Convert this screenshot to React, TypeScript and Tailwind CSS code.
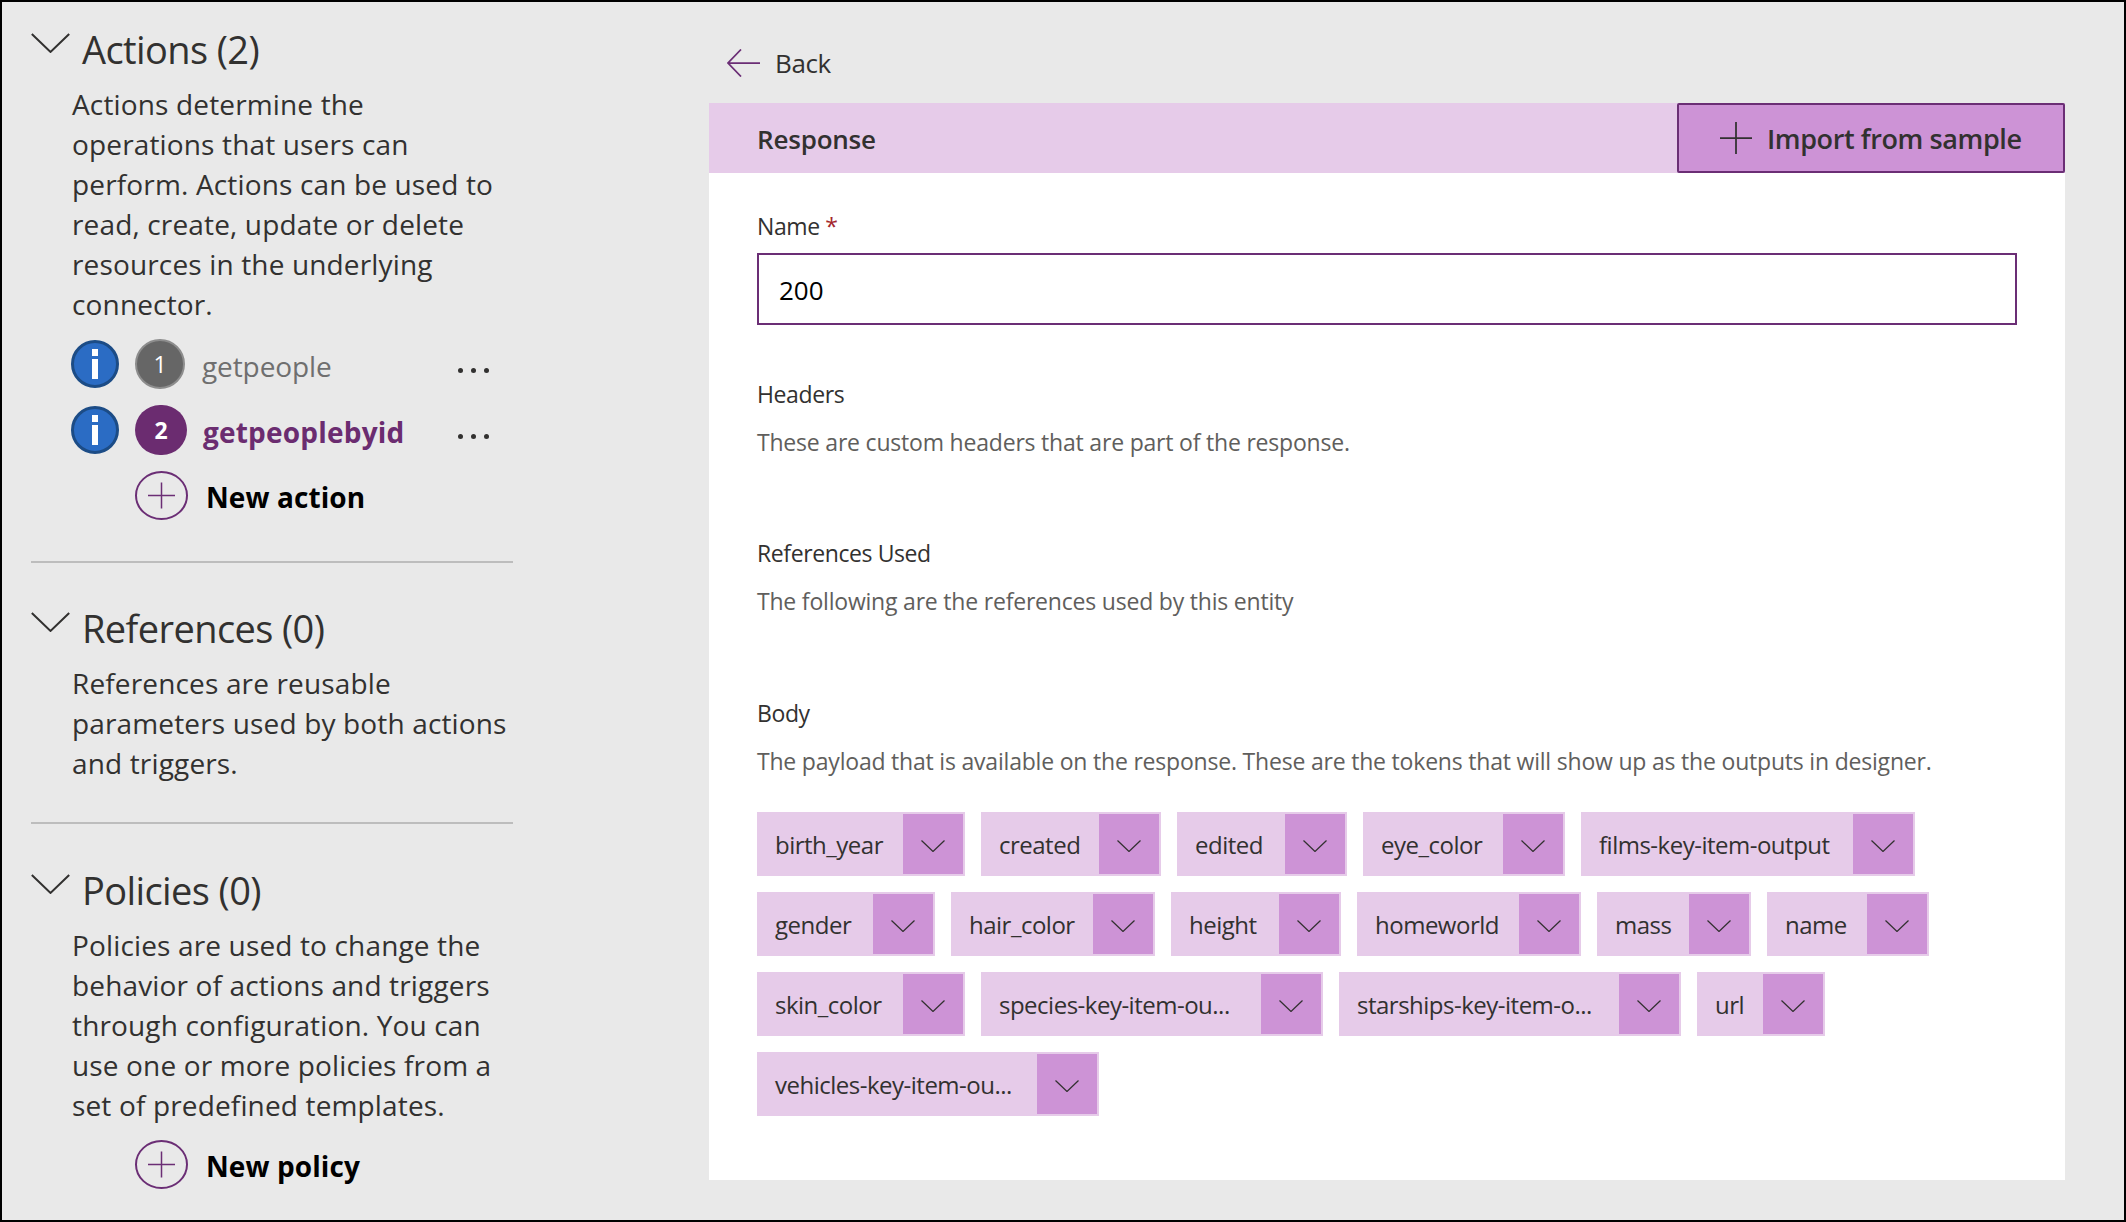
const FONT = "font-['Open_Sans','Noto_Sans',sans-serif]";

function Chevron({ className }: { className: string }) {
  return (
    <svg viewBox="0 0 24 12" fill="none" className={className}>
      <path d="M0.5 0.5 L12 11.5 L23.5 0.5" stroke="currentColor" strokeWidth="1.25" />
    </svg>
  );
}

function Info() {
  return (
    <svg viewBox="0 0 48 48" className="w-12 h-12 shrink-0">
      <circle cx="24" cy="24" r="22.5" fill="#2b6cc4" stroke="#1c4c86" strokeWidth="3" />
      <rect x="21" y="9" width="6" height="7" fill="#fff" />
      <rect x="21" y="19" width="6" height="20" fill="#fff" />
    </svg>
  );
}

function PlusRow({ label }: { label: string }) {
  return (
    <div className="flex items-center h-[49px] pl-[104px]">
      <svg viewBox="0 0 53 49" className="w-[53px] h-[49px] shrink-0" fill="none">
        <ellipse cx="26.5" cy="24.5" rx="25.5" ry="23.5" stroke="#6b2e75" strokeWidth="2" />
        <path d="M13 24.5 H40 M26.5 11.5 V37.5" stroke="#6b2e75" strokeWidth="1.5" />
      </svg>
      <span className="ml-[18px] mt-[3px] text-[28px] leading-[40px] font-bold text-black tracking-[0.1px]">{label}</span>
    </div>
  );
}

function SectionHead({ title }: { title: string }) {
  return (
    <div className="flex items-center h-14 text-[#323130]">
      <Chevron className="w-[39px] h-5 mb-[14px] shrink-0" />
      <span className="ml-3 mb-[2px] text-[38px] leading-[54px] tracking-[-0.6px]">{title}</span>
    </div>
  );
}

function Desc({ lines }: { lines: string[] }) {
  return (
    <div className="mt-[6px] pl-[41px] text-[28px] leading-[40px] text-[#323130] tracking-[0.15px]">
      {lines.map((l) => (
        <div key={l} className="whitespace-nowrap">{l}</div>
      ))}
    </div>
  );
}

function Dots() {
  return (
    <div className="absolute left-[427px] top-[29px] flex gap-[8px]">
      <span className="w-[5px] h-[5px] rounded-full bg-[#323130]" />
      <span className="w-[5px] h-[5px] rounded-full bg-[#323130]" />
      <span className="w-[5px] h-[5px] rounded-full bg-[#323130]" />
    </div>
  );
}

const chips: { label: string; w: string }[][] = [
  [
    { label: "birth_year", w: "w-[208px]" },
    { label: "created", w: "w-[180px]" },
    { label: "edited", w: "w-[170px]" },
    { label: "eye_color", w: "w-[202px]" },
    { label: "films-key-item-output", w: "w-[334px]" },
  ],
  [
    { label: "gender", w: "w-[178px]" },
    { label: "hair_color", w: "w-[204px]" },
    { label: "height", w: "w-[170px]" },
    { label: "homeworld", w: "w-[224px]" },
    { label: "mass", w: "w-[154px]" },
    { label: "name", w: "w-[162px]" },
  ],
  [
    { label: "skin_color", w: "w-[208px]" },
    { label: "species-key-item-ou...", w: "w-[342px]" },
    { label: "starships-key-item-o...", w: "w-[342px]" },
    { label: "url", w: "w-[128px]" },
  ],
  [{ label: "vehicles-key-item-ou...", w: "w-[342px]" }],
];

function Chip({ label, w }: { label: string; w: string }) {
  return (
    <div className={`${w} h-16 flex items-stretch justify-between bg-[#e6cbe9] p-[2px] text-[#323130]`}>
      <span className="pl-4 pt-[4px] text-[24px] leading-[54px] whitespace-nowrap tracking-[-0.5px]">{label}</span>
      <div className="w-[60px] shrink-0 bg-[#cd93d6] flex items-center justify-center">
        <Chevron className="w-6 h-3 mt-1" />
      </div>
    </div>
  );
}

function Field({ title, desc, className }: { title: string; desc: string; className: string }) {
  return (
    <div className={className}>
      <div className="h-8 text-[23px] leading-8 text-[#323130] tracking-[-0.4px]">{title}</div>
      <div className="mt-4 h-8 text-[23px] leading-8 text-[#605e5c] tracking-[-0.2px] whitespace-nowrap">{desc}</div>
    </div>
  );
}

export default function App() {
  return (
    <div className={`${FONT} w-[2126px] h-[1222px] overflow-hidden flex bg-[#e9e9e9] border-2 border-black`}>
      <aside className="w-[707px] shrink-0 pl-[29px] pt-5">
        <SectionHead title="Actions (2)" />
        <Desc
          lines={[
            "Actions determine the",
            "operations that users can",
            "perform. Actions can be used to",
            "read, create, update or delete",
            "resources in the underlying",
            "connector.",
          ]}
        />
        <div className="mt-[15px] flex flex-col gap-4">
          <div className="relative flex items-center h-[50px] pl-10">
            <Info />
            <div className="ml-4 w-[50px] h-[50px] shrink-0 rounded-full bg-[#666666] border-2 border-[#8d8d8d] flex items-center justify-center text-white text-[23px]">1</div>
            <span className="ml-[17px] mt-1 text-[28px] leading-[40px] text-[#6f6f6f] tracking-[-0.1px]">getpeople</span>
            <Dots />
          </div>
          <div className="relative flex items-center h-[50px] pl-10">
            <Info />
            <div className="ml-4 w-[52px] h-[50px] shrink-0 rounded-full bg-[#6b2c70] flex items-center justify-center text-white font-bold text-[23px]">2</div>
            <span className="ml-4 mt-1 text-[28px] leading-[40px] font-bold text-[#6b2c70] tracking-[0.2px]">getpeoplebyid</span>
            <Dots />
          </div>
          <PlusRow label="New action" />
        </div>
        <div className="mt-[41px] h-0.5 w-[482px] bg-[#bdbdbd]" />
        <div className="mt-[38px]">
          <SectionHead title="References (0)" />
          <Desc lines={["References are reusable", "parameters used by both actions", "and triggers."]} />
        </div>
        <div className="mt-[39px] h-0.5 w-[482px] bg-[#bdbdbd]" />
        <div className="mt-[39px]">
          <SectionHead title="Policies (0)" />
          <Desc
            lines={[
              "Policies are used to change the",
              "behavior of actions and triggers",
              "through configuration. You can",
              "use one or more policies from a",
              "set of predefined templates.",
            ]}
          />
        </div>
        <div className="mt-[15px]">
          <PlusRow label="New policy" />
        </div>
      </aside>

      <main className="w-[1356px] shrink-0">
        <div className="h-[101px] flex items-center pt-4 pl-[18px] text-[#323130]">
          <svg viewBox="0 0 33 28" className="w-[33px] h-7 shrink-0 mt-1" fill="none">
            <path d="M14 0.5 L1 14 L14 27.5 M1 14 H33" stroke="#6b2e75" strokeWidth="1.75" />
          </svg>
          <span className="ml-[15px] text-[26px] leading-10 tracking-[-0.4px] mt-1">Back</span>
        </div>

        <div className="h-[70px] flex items-stretch justify-between bg-[#e6cbe9]">
          <span className="pl-12 pt-[2px] text-[26px] leading-[68px] font-semibold text-[#323130] tracking-[-0.2px]">Response</span>
          <div className="w-[388px] bg-[#cd93d6] border-2 border-[#6b2e75] rounded-[2px] flex items-center pl-[41px] text-[#323130]">
            <svg viewBox="0 0 32 32" className="w-8 h-8 shrink-0" fill="none">
              <path d="M0 16 H32 M16 0 V32" stroke="currentColor" strokeWidth="1.75" />
            </svg>
            <span className="ml-[15px] pt-[2px] text-[27px] leading-10 font-semibold tracking-[-0.4px] whitespace-nowrap">Import from sample</span>
          </div>
        </div>

        <div className="bg-white px-12 pt-[37px] pb-16">
          <div className="h-8 text-[23px] leading-8 text-[#323130] tracking-[-0.4px]">
            Name <span className="text-[#a4262c]">*</span>
          </div>
          <div className="mt-[11px] w-[1260px] h-[72px] border-2 border-[#6b2e75] pl-5 pt-[2px] flex items-center text-[26px] text-black">200</div>

          <Field className="mt-[53px]" title="Headers" desc="These are custom headers that are part of the response." />
          <Field className="mt-[79px]" title="References Used" desc="The following are the references used by this entity" />
          <Field
            className="mt-[80px]"
            title="Body"
            desc="The payload that is available on the response. These are the tokens that will show up as the outputs in designer."
          />

          <div className="mt-[35px] flex flex-col gap-4">
            {chips.map((row) => (
              <div key={row[0].label} className="flex gap-4">
                {row.map((c) => (
                  <Chip key={c.label} label={c.label} w={c.w} />
                ))}
              </div>
            ))}
          </div>
        </div>
      </main>
    </div>
  );
}
